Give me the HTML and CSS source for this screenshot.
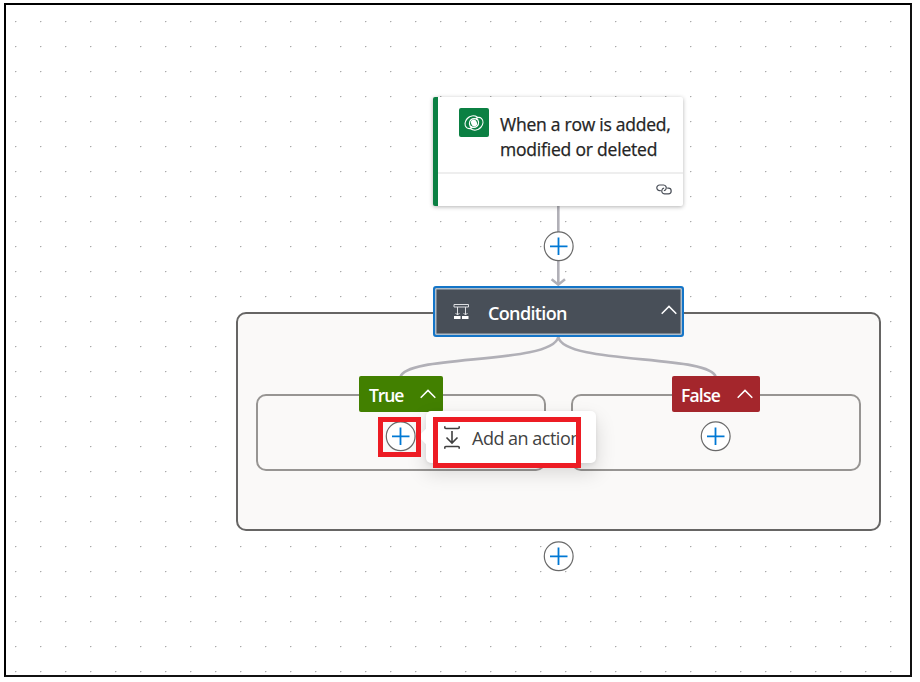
FILE: index.html
```html
<!DOCTYPE html>
<html lang="en">
<head>
<meta charset="utf-8">
<title>Flow designer</title>
<link rel="stylesheet" href="styles.css">
</head>
<body>
<main class="canvas">
  <svg class="dots" width="920" height="682">
    <defs><pattern id="grid" x="15" y="21" width="25" height="25" patternUnits="userSpaceOnUse"><path d="M0 0h1v1h-1z" fill="#aaa"/><path d="M1 0h1v1h-1zM0 1h1v.4h-1z" fill="#ddd"/></pattern></defs>
    <rect x="6" y="5" width="904" height="670" fill="url(#grid)"/>
  </svg>
  <section class="group"></section>
  <section class="branch branch-true"></section>
  <section class="branch branch-false"></section>
  <svg class="edges" width="920" height="682" fill="none" stroke="#b1b0b7" stroke-width="2.6">
    <path d="M558.3 206V284M551.6 279.3l6.7 5.4 6.7-5.4"/>
    <path d="M558.3 337C552 365 406 354 400.5 377M558.3 337C564 365 710 354 715.7 377"/>
  </svg>

  <article class="card">
    <header class="card-head">
      <span class="connector"><svg width="20" height="16" viewBox="0 0 20 16" fill="none" stroke="#fff" stroke-width="1.2"><path d="M13.600 2.200C10 .1 5.800.8 3.300 3.500.6 6.500.3 10.300 2.600 12.600c1.600 1.300 3.900.9 5.300.1C4.900 11 4.600 6.800 7 4.700 9 3 12 3.200 13.600 5"/><path d="M6.400 13.800c3.600 2.100 7.800 1.400 10.300-1.300 2.700-3 3-6.800.7-9.100-1.600-1.300-3.900-.9-5.300-.1 3 1.700 3.300 5.900.9 8-2 1.700-5 1.500-6.600-.3"/><ellipse cx="10" cy="8" rx="2.900" ry="3.500" transform="rotate(-25 10 8)" fill="#fff" stroke="none"/></svg></span>
      <h1 class="card-title">When a row is added,<br><span class="line-two">modified or deleted</span></h1>
    </header>
    <footer class="card-foot"><svg width="16" height="11" viewBox="0 0 16 11" fill="none" stroke="#4a4f58" stroke-width="1.200"><path d="M4.800 6.600H3.600a2.800 2.800 0 0 1 0-5.600h3.800a2.800 2.800 0 0 1 2.500 4.200c-.4.800-1.200 1.300-2 1.400"/><path d="M11.200 4.200h1.200a2.800 2.800 0 0 1 0 5.600H8.600a2.800 2.800 0 0 1-2.500-4.200c.4-.8 1.200-1.300 2-1.400"/></svg></footer>
  </article>

  <article class="condition">
    <svg class="condition-icon" width="17" height="17" viewBox="0 0 17 17" fill="none" stroke="#dcdee1"><path d="M1 1.500h14.500v2.500h-14.500zM4.500 4v8M12.500 4v8M2.500 10l2 2 2-2M10.500 10l2 2 2-2"/><path d="M1 13h6.500v3H1zM9 13h6.500v3H9z" fill="#fff" stroke="none"/></svg>
    <span class="condition-title">Condition</span>
    <svg class="chevron" width="16" height="10" viewBox="0 0 16 10"><path d="M.7 8.700 8 1.400l7.300 7.300"/></svg>
  </article>

  <div class="tag tag-true"><span>True</span><svg class="chevron" width="16" height="10" viewBox="0 0 16 10"><path d="M.7 8.700 8 1.400l7.300 7.300"/></svg></div>
  <div class="tag tag-false"><span>False</span><svg class="chevron" width="16" height="10" viewBox="0 0 16 10"><path d="M.7 8.700 8 1.400l7.300 7.300"/></svg></div>

  <div class="plus plus-top"><svg width="30" height="30"><circle cx="14.700" cy="15.300" r="14.400"/><path d="M6 15.300h17.500M14.500 6.500v17.500"/></svg></div>
  <div class="plus plus-true"><svg width="30" height="30"><circle cx="14.700" cy="15.300" r="14.400"/><path d="M6 15.300h17.500M14.500 6.500v17.500"/></svg></div>
  <div class="plus plus-false"><svg width="30" height="30"><circle cx="14.700" cy="15.300" r="14.400"/><path d="M6 15.300h17.500M14.500 6.500v17.500"/></svg></div>
  <div class="plus plus-end"><svg width="30" height="30"><circle cx="14.700" cy="15.300" r="14.400"/><path d="M6 15.300h17.500M14.500 6.500v17.500"/></svg></div>

  <div class="callout">
    <svg width="16" height="23" viewBox="0 0 16 23" fill="none" stroke="#404040" stroke-width="1.600"><path d="M.8.300v1.200q0 1 1 1h12.400q1 0 1-1V.300M.8 22.700v-1.200q0-1 1-1h12.400q1 0 1 1v1.200M8 5v12M2.500 11.500 8 17l5.500-5.500"/></svg>
    <span>Add an action</span>
  </div>
  <div class="mark mark-plus"></div>
  <div class="mark mark-action"></div>
  <div class="frame"></div>
</main>
</body>
</html>
```
FILE: styles.css
```css
* { box-sizing: border-box; }
body { margin: 0; background: #fff; font-family: "Open Sans", "Noto Sans", sans-serif; }
.canvas { position: relative; width: 920px; height: 682px; overflow: hidden; }
.canvas svg { display: block; flex: none; overflow: visible; }
.dots, .edges { position: absolute; left: 0; top: 0; }
.frame { position: absolute; left: 4px; top: 3px; width: 908px; height: 674px; border: 2px solid #000; border-right-color: #111; border-bottom-color: #111; }
.group { position: absolute; left: 236px; top: 312px; width: 645px; height: 219px; border: 2px solid #666564; border-radius: 10px; background: #faf9f8; }
.branch { position: absolute; top: 394px; width: 290px; height: 77px; border: 2px solid #979593; border-radius: 10px; }
.branch-true { left: 256px; }
.branch-false { left: 571px; }
.card { position: absolute; left: 433px; top: 97px; width: 250px; height: 109px; background: #fff; border-left: 5px solid #0b8043; border-radius: 2px; box-shadow: 0 1px 4px rgba(0,0,0,.3); }
.card-head { display: flex; gap: 11px; height: 77px; padding: 11px 0 0 21px; border-bottom: 2px solid #eee; }
.connector { display: flex; align-items: center; justify-content: center; width: 30px; height: 29px; flex: none; border-radius: 2px; background: #0b8043; }
.card-title { margin: 4px 0 0; color: #242424; font-size: 17.500px; font-weight: 500; line-height: 25px; letter-spacing: -.25px; -webkit-text-stroke: .25px #242424; white-space: nowrap; }
.line-two { letter-spacing: -.2px; }
.card-foot { display: flex; align-items: center; justify-content: flex-end; height: 31px; padding-right: 11px; }
.condition { position: absolute; left: 433px; top: 286px; width: 250.500px; height: 51px; display: flex; align-items: center; padding: 0 7px 0 20px; color: #fff; background: #484f58; border: 2px solid #1475c8; border-radius: 3px; box-shadow: inset 0 0 0 1.500px #aebdca; }
.condition-icon { margin: 0 18px 0 -2px; }
.condition-title { flex: 1; margin-top: 3px; font-size: 18px; font-weight: 600; line-height: 24px; letter-spacing: -.65px; }
.chevron { fill: none; stroke: #fff; stroke-width: 1.500; }
.condition .chevron { position: relative; top: -2px; left: 2px; }
.tag { position: absolute; top: 376px; height: 36px; display: flex; align-items: center; justify-content: space-between; padding: 2px 7px 0 10px; color: #fff; font-size: 17.500px; font-weight: 600; letter-spacing: -.8px; border-radius: 2px; }
.tag .chevron { margin-top: -3px; }
.tag-true { left: 359px; width: 84px; letter-spacing: -1.100px; background: #428000; }
.tag-false { left: 672px; width: 88px; padding-left: 9px; background: #a4262c; }
.plus { position: absolute; width: 30px; height: 30px; }
.plus circle { fill: #fff; stroke: #696969; stroke-width: 1.200; }
.plus path { stroke: #0078d4; stroke-width: 1.800; }
.plus-top { left: 544px; top: 231px; }
.plus-true { left: 386px; top: 421px; }
.plus-false { left: 701px; top: 421px; }
.plus-end { left: 544px; top: 541px; }
.callout { position: absolute; left: 426px; top: 411px; width: 170px; height: 52px; display: flex; align-items: center; gap: 12px; padding-left: 18px; color: #424242; font-size: 18px; letter-spacing: -.5px; white-space: nowrap; background: #fff; border-radius: 5px; box-shadow: 0 9px 20px rgba(0,0,0,.15), 0 1px 4px rgba(0,0,0,.08); }
.callout span { margin-top: 2px; font-weight: 400; }
.callout::before { content: ""; position: absolute; left: -5px; top: 19px; width: 13px; height: 13px; background: #fff; transform: rotate(45deg); }
.mark { position: absolute; top: 417px; border: 5px solid #ed1c24; }
.mark-plus { left: 378px; width: 43px; height: 40px; }
.mark-action { left: 433px; width: 148px; height: 51px; }
```
